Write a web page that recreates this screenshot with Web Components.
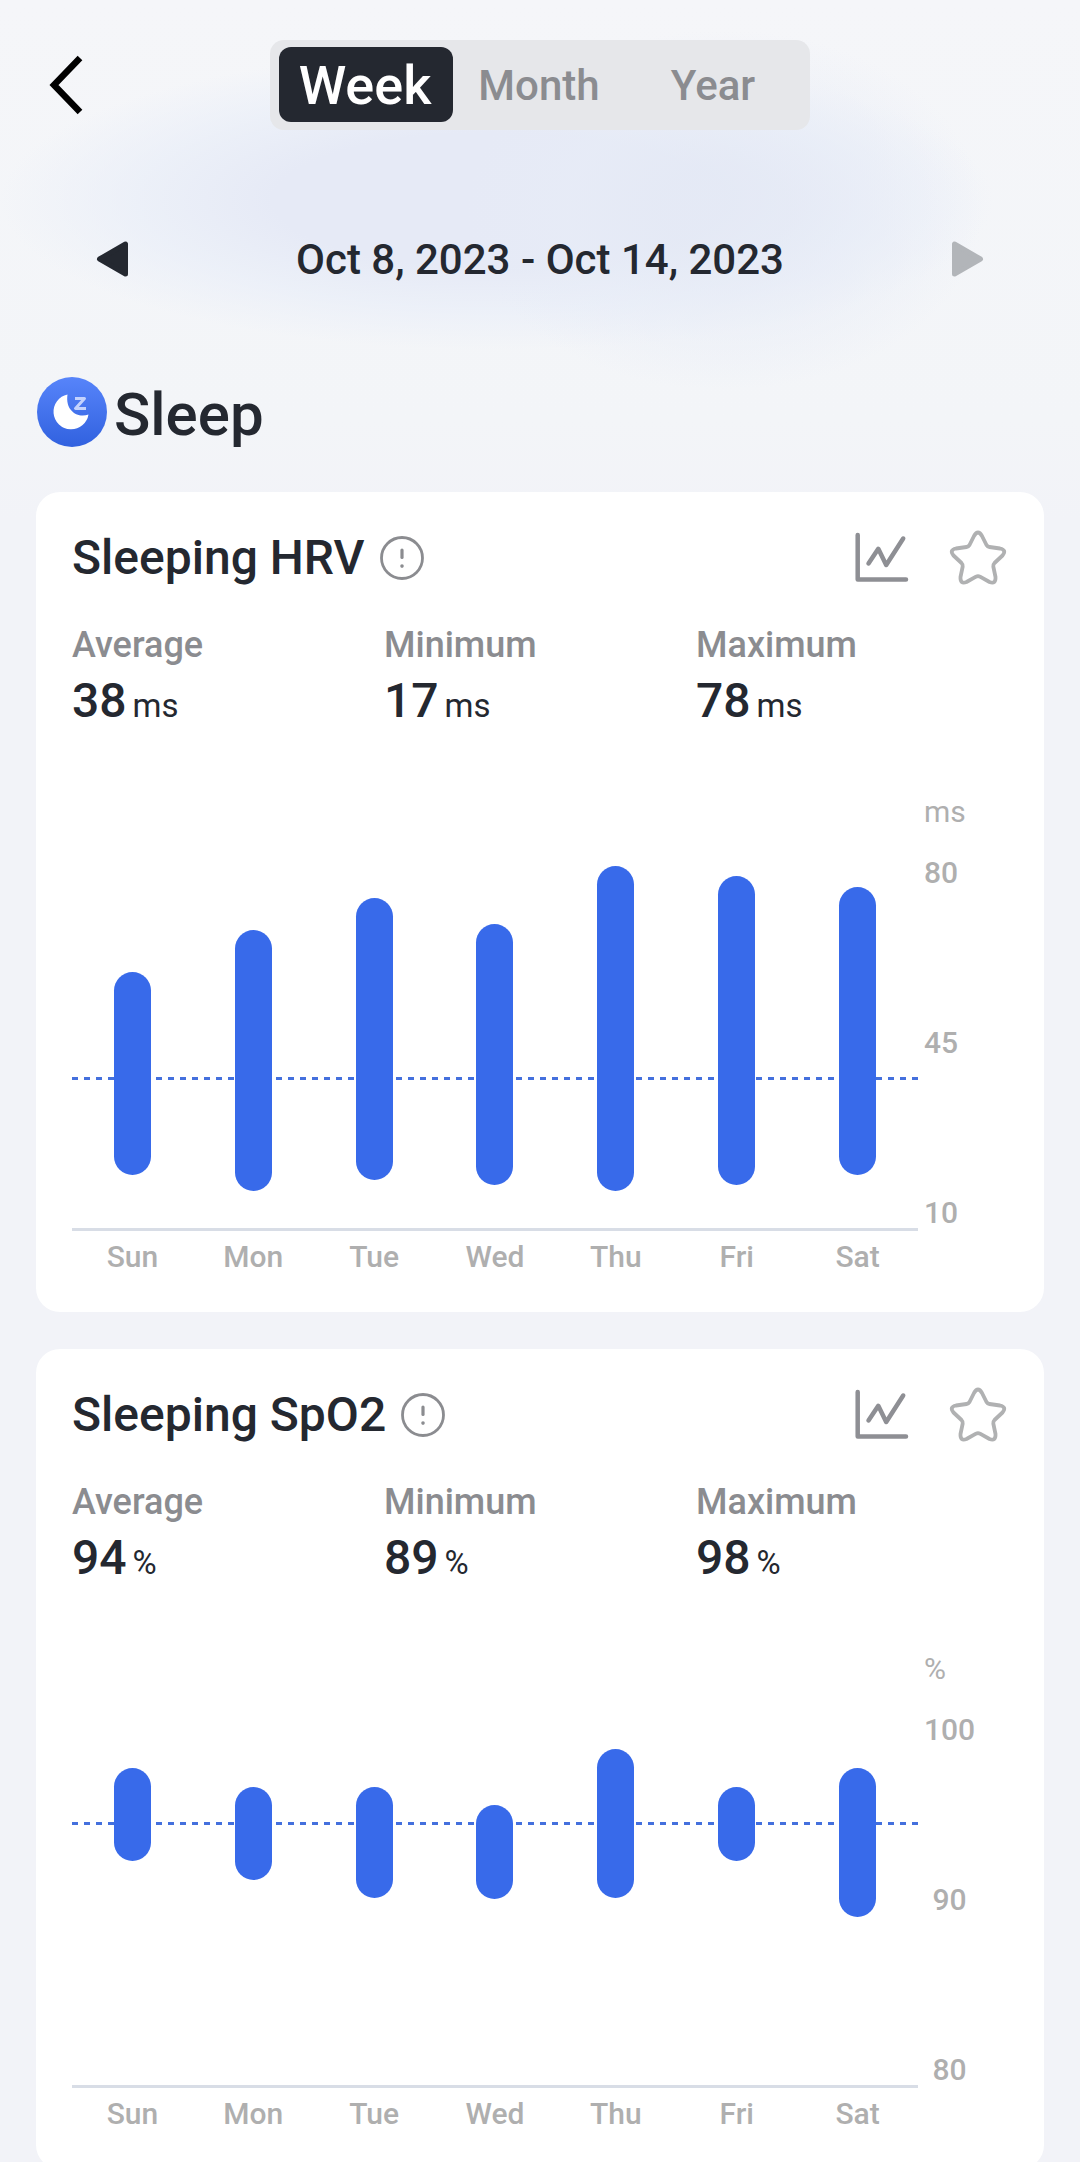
<!DOCTYPE html>
<html lang="en">
<head>
<meta charset="utf-8">
<meta name="viewport" content="width=device-width, initial-scale=1">
<title>Sleep trends</title>
<style>
  html, body { margin: 0; height: 100%; }
  body { font-family: Roboto, "Noto Sans", sans-serif; color: #242830; }
</style>
</head>
<body>
<trend-app>
  <range-switch slot="top"></range-switch>
  <date-pager slot="top">Oct 8, 2023 - Oct 14, 2023</date-pager>
  <section-heading>Sleep</section-heading>
  <metric-card unit="ms" average="38" minimum="17" maximum="78" scale="80,45,10"
    ranges="20-58,17-66,19-72,18-67,17-78,18-76,20-74">Sleeping HRV</metric-card>
  <metric-card unit="%" average="94" minimum="89" maximum="98" scale="100,90,80"
    ranges="92-97,91-96,90-96,90-95,90-98,92-96,89-97">Sleeping SpO2</metric-card>
</trend-app>

<script>
const BUTTON_RESET = `
  button { margin: 0; padding: 0; border: 0; background: none; font: inherit; color: inherit; cursor: pointer; }
  svg { display: block; }
`;

class BaseElement extends HTMLElement {
  connectedCallback() {
    if (this.shadowRoot) return;
    this.attachShadow({ mode: "open" }).innerHTML = this.render();
  }
}

customElements.define("trend-app", class extends BaseElement {
  render() {
    return `<style>
      :host {
        display: block; box-sizing: border-box; height: 100vh; overflow-y: auto; scrollbar-width: none;
        padding: 40px 36px 0;
        background:
          radial-gradient(ellipse 24% 180px at 67% 210px, #e4e9f5aa 25%, #e7ecf788 60%, #ebf0fa00 100%),
          radial-gradient(ellipse 46% 150px at 46% 200px, #e6eaf6 45%, #e9eef8bb 72%, #eef2fa00 100%),
          linear-gradient(#f5f6f9, #f3f5f8 420px, #f2f3f8 520px);
      }
      header { display: flex; flex-direction: column; gap: 105px; margin-bottom: 92px; }
      main { display: flex; flex-direction: column; gap: 37px; }
    </style>
    <header><slot name="top"></slot></header>
    <main><slot></slot></main>`;
  }
});

customElements.define("range-switch", class extends BaseElement {
  render() {
    return `<style>${BUTTON_RESET}
      :host { display: grid; grid-template-columns: 1fr 540px 1fr; align-items: center; }
      .back { justify-self: start; padding-left: 12px; }
      .group { display: grid; grid-template-columns: repeat(3, 1fr); box-sizing: border-box;
        padding: 7px 9px 8px; border-radius: 14px; background: #e6e7ea; }
      .group button { height: 75px; padding: 2px 2px 0 0; border-radius: 12px; font-size: 42px; line-height: 50px; font-weight: 500; color: #8b8c90; }
      .group button[aria-pressed="true"] { background: #242830; color: #fff; font-size: 54px; }
    </style>
    <button class="back" aria-label="Back">
      <svg width="38" height="60" viewBox="0 0 38 60" fill="none" stroke="#000" stroke-width="6.5"><path d="M32 3 6 30 32 57"/></svg>
    </button>
    <div class="group" role="group" aria-label="Range">
      <button aria-pressed="true">Week</button><button aria-pressed="false">Month</button><button aria-pressed="false">Year</button>
    </div>`;
  }
});

customElements.define("date-pager", class extends BaseElement {
  render() {
    const arrow = (d) => `<svg width="32" height="38" viewBox="0 0 32 38" fill="currentColor" stroke="currentColor" stroke-width="5" stroke-linejoin="round"><path d="${d}"/></svg>`;
    return `<style>${BUTTON_RESET}
      :host { display: flex; align-items: center; justify-content: space-between; padding: 0 60px;
        font-size: 42px; line-height: 50px; font-weight: 500; }
      button:disabled { color: #b2b5b9; cursor: default; }
    </style>
    <button aria-label="Previous week">${arrow("M29.5 3V33L3.500 18Z")}</button>
    <span><slot></slot></span>
    <button aria-label="Next week" disabled>${arrow("M2.500 3V33L28.500 18Z")}</button>`;
  }
});

customElements.define("section-heading", class extends BaseElement {
  render() {
    return `<style>
      :host { display: block; }
      div { display: flex; gap: 6px; align-items: flex-start; }
      h1 { margin: 0; font-size: 60px; line-height: 76px; font-weight: 500; }
      svg { display: block; }
    </style>
    <div>
      <svg width="72" height="70" viewBox="0 0 72 70" aria-hidden="true">
        <defs><linearGradient id="g" x1="0" y1="0" x2="0" y2="1"><stop stop-color="#5784fa"/><stop offset="1" stop-color="#3161df"/></linearGradient></defs>
        <circle cx="36" cy="35" r="35" fill="url(#g)"/>
        <path fill="#fff" d="M31.500 17.500A17.600 17.600 0 1 0 52.500 37.500C42 41.500 29 34 31.500 17.500Z"/>
        <path fill="none" stroke="#c3d2fd" stroke-width="3" stroke-linejoin="round" d="M39 21.500H48.500L39.500 31.500H50"/>
      </svg>
      <h1><slot></slot></h1>
    </div>`;
  }
});

customElements.define("stat-value", class extends BaseElement {
  render() {
    return `<style>
      :host { display: flex; flex-direction: column; gap: 7px; }
      .label { font-size: 36px; line-height: 42px; font-weight: 500; color: #8b8c90; }
      .value { display: flex; align-items: baseline; gap: 6px; font-size: 48px; line-height: 56px; font-weight: 500; }
      .unit { font-size: 33px; line-height: 36px; font-weight: 400; }
    </style>
    <span class="label">${this.getAttribute("label")}</span>
    <span class="value"><slot></slot><span class="unit">${this.getAttribute("unit")}</span></span>`;
  }
});

customElements.define("range-chart", class extends BaseElement {
  render() {
    const ticks = this.getAttribute("scale").split(",").map(Number);
    const max = ticks[0], min = ticks[ticks.length - 1];
    const pct = (v) => (max - v) / (max - min) * 100;
    const days = ["Sun", "Mon", "Tue", "Wed", "Thu", "Fri", "Sat"];
    const bars = this.getAttribute("ranges").split(",").map((r) => {
      const [lo, hi] = r.split("-").map(Number);
      return `<i style="--top:${pct(hi)}%;--size:${pct(lo) - pct(hi)}%"></i>`;
    }).join("");
    return `<style>
      :host { display: grid; grid-template-columns: 1fr 84px; column-gap: 6px;
        font-size: 30px; line-height: 36px; font-weight: 500; color: #afafaf; }
      .unit { grid-column: 2; margin-bottom: 25px; font-weight: 400; }
      .plot { position: relative; height: 373px; border-bottom: 3px solid #d8dde6; }
      .average { position: absolute; left: 0; right: 0; top: calc(var(--top) - 2px); height: 3px;
        background: repeating-linear-gradient(90deg, #4470dd 0 6px, transparent 6px 12px); }
      .bars { position: absolute; inset: 0; display: grid; grid-template-columns: repeat(7, 1fr); justify-items: center; }
      .bars i { position: relative; top: var(--top); height: var(--size); width: 37px; border-radius: 19px; background: #386aea; }
      .ticks { display: flex; flex-direction: column; justify-content: space-between; align-items: center; justify-self: start; }
      .days { display: grid; grid-template-columns: repeat(7, 1fr); text-align: center; margin-top: 8px; }
    </style>
    <span class="unit">${this.getAttribute("unit")}</span>
    <div class="plot">
      <div class="average" style="--top:${pct(Number(this.getAttribute("average")))}%"></div>
      <div class="bars">${bars}</div>
    </div>
    <div class="ticks">${ticks.map((t) => `<span>${t}</span>`).join("")}</div>
    <div class="days">${days.map((d) => `<span>${d}</span>`).join("")}</div>`;
  }
});

customElements.define("metric-card", class extends BaseElement {
  render() {
    const a = (n) => this.getAttribute(n);
    const stat = (label, name) => `<stat-value label="${label}" unit="${a("unit")}">${a(name)}</stat-value>`;
    return `<style>${BUTTON_RESET}
      :host { display: block; padding: 38px 36px 37px; border-radius: 24px; background: #fff; }
      :host(:first-of-type) { margin-top: 2px; }
      .head { display: flex; align-items: center; height: 56px; }
      h2 { margin: 0 15px 0 0; font-size: 48px; line-height: 56px; font-weight: 500; }
      .chart { margin-left: auto; margin-right: 36px; }
      .stats { display: grid; grid-template-columns: repeat(3, 1fr); margin: 38px 0 65px; }
    </style>
    <div class="head">
      <h2><slot></slot></h2>
      <button aria-label="About this metric">
        <svg width="44" height="44" viewBox="0 0 44 44" fill="none" stroke="#8b8c90" stroke-linecap="round">
          <circle cx="22" cy="22" r="20.500" stroke-width="2.800"/><path stroke-width="3.200" d="M22 14V21.500"/><path stroke-width="3.600" d="M22 30v.1"/>
        </svg>
      </button>
      <button class="chart" aria-label="Show trend">
        <svg width="60" height="60" viewBox="0 0 60 60" fill="none" stroke="#8e8f94" stroke-width="4.500" stroke-linecap="round" stroke-linejoin="round">
          <path d="M5.700 7V51.500H54M16.500 35.500 26.300 20.800 34.200 37 51.200 10.500"/>
        </svg>
      </button>
      <button aria-label="Add to favorites">
        <svg width="60" height="60" viewBox="0 0 60 60" fill="none" stroke="#b0b1b2" stroke-width="3.800" stroke-linejoin="round">
          <path d="M26 8Q30 1 34 8L38.500 17Q39.500 18.700 41.500 19L52 20.500Q59 22 54.500 27.500L46.500 35Q45 36.500 45.300 38.500L47.500 49Q48 56.500 41.500 54L32 48.700Q30 47.700 28 48.700L18.500 54Q12 56.500 12.500 49L14.700 38.500Q15 36.500 13.500 35L5.500 27.500Q1 22 8 20.500L18.500 19Q20.500 18.700 21.500 17Z"/>
        </svg>
      </button>
    </div>
    <div class="stats">${stat("Average", "average")}${stat("Minimum", "minimum")}${stat("Maximum", "maximum")}</div>
    <range-chart unit="${a("unit")}" scale="${a("scale")}" ranges="${a("ranges")}" average="${a("average")}"></range-chart>`;
  }
});
</script>
</body>
</html>
